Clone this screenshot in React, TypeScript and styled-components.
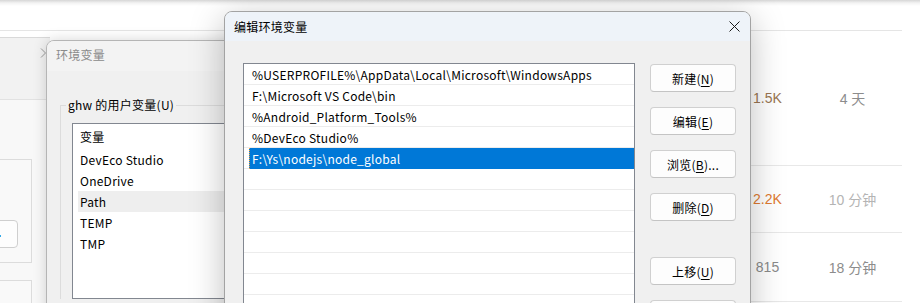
import React from "react";
import styled, { createGlobalStyle } from "styled-components";

const GlobalStyle = createGlobalStyle`
  html, body { margin: 0; padding: 0; }
  body {
    width: 920px; height: 303px; overflow: hidden; background: #fff;
    font-family: "Noto Sans CJK SC", "Noto Sans", sans-serif;
  }
  * { box-sizing: border-box; }
`;

const UI_FONT = `"Noto Sans CJK SC", "Noto Sans", sans-serif`;

const Stage = styled.div`
  position: relative;
  width: 920px;
  height: 303px;
  overflow: hidden;
  background: #fff;
`;

/* ---------- background web page ---------- */
const Page = styled.div`
  display: flex;
  flex-direction: column;
  width: 920px;
  height: 303px;
`;
const TopShade = styled.div`
  height: 6px;
  background: linear-gradient(#d6d6d6, #f3f3f3 3px, #fff);
`;
const PageHeader = styled.div`
  height: 25px;
  margin-right: 18px;
  border-bottom: 1px solid #e5e5e5;
`;
const StatRow = styled.div<{ $h: number }>`
  height: ${(p) => p.$h}px;
  flex: none;
  margin-right: 18px;
  padding-left: 739px;
  display: flex;
  align-items: center;
  border-bottom: 1px solid #e8e8e8;
  font-family: "Liberation Sans", "Noto Sans CJK SC", sans-serif;
  font-size: 14px;
`;
const Count = styled.span<{ $c: string }>`
  width: 61px;
  text-align: center;
  color: ${(p) => p.$c};
`;
const Ago = styled.span<{ $c: string }>`
  width: 106px;
  margin-left: 7px;
  text-align: center;
  color: ${(p) => p.$c};
`;

/* ---------- left background window ---------- */
const LeftWin = styled.div`
  position: absolute;
  left: -150px;
  top: 37px;
  width: 200px;
  height: 280px;
  border-top: 1px solid #d9d9d9;
  display: flex;
  flex-direction: column;
  overflow: hidden;
`;
const LeftHeader = styled.div`
  height: 62px;
  flex: none;
  background: #f2f2f2;
  border-bottom: 1px solid #e2e2e2;
  display: flex;
  justify-content: flex-end;
  padding: 10px 3px 0 0;
`;
const LeftBody = styled.div`
  flex: 1;
  background: #f8f8f8;
  padding: 59px 18px 0 20px;
  display: flex;
  flex-direction: column;
  gap: 17px;
`;
const Card = styled.div<{ $h: number }>`
  height: ${(p) => p.$h}px;
  flex: none;
  background: #f9f9f9;
  border: 1px solid #dcdcdc;
  display: flex;
  justify-content: flex-end;
  padding: 60px 13px 0 0;
`;
const GhostButton = styled.div`
  width: 60px;
  height: 28px;
  background: #fdfdfd;
  border: 1px solid #cfcfcf;
  border-radius: 4px;
  position: relative;
  &::after {
    content: "";
    position: absolute;
    right: 16px;
    top: 14px;
    width: 2px;
    height: 2px;
    background: #32a8e8;
  }
`;

/* ---------- 环境变量 window ---------- */
const EnvWin = styled.div`
  position: absolute;
  left: 46px;
  top: 40px;
  width: 520px;
  height: 300px;
  border: 1px solid #b5b5b5;
  border-radius: 8px 8px 0 0;
  background: #f0f0f0;
  box-shadow: 0 0 14px rgba(0, 0, 0, 0.16);
  font-family: ${UI_FONT};
  font-size: 12px;
  letter-spacing: 0.25px;
  overflow: hidden;
`;
const EnvTitleBar = styled.div`
  height: 30px;
  display: flex;
  align-items: center;
  padding: 0 0 4px 9px;
  background: #f3f3f3;
  color: #8a8a8a;
`;
const EnvContent = styled.div`
  padding: 26px 0 0 13px;
`;
const Group = styled.fieldset`
  margin: 0;
  padding: 0;
  border: 1px solid #dcdcdc;
  border-right: none;
  border-bottom: none;
  min-width: 0;
`;
const GroupLabel = styled.legend`
  margin-left: 5px;
  padding: 0 2px;
  line-height: 16px;
  color: #000;
`;
const UserList = styled.div`
  margin: 10px 0 0 11px;
  height: 176px;
  border: 1px solid #828790;
  border-right: none;
  background: #fff;
`;
const UserHeader = styled.div`
  height: 25px;
  display: flex;
  align-items: center;
  padding-left: 7px;
  color: #000;
`;
const UserRow = styled.div<{ $hot?: boolean }>`
  height: 21px;
  margin-left: 5px;
  padding-left: 2px;
  display: flex;
  align-items: center;
  color: #000;
  background: ${(p) => (p.$hot ? "#eeeeee" : "transparent")};
`;

/* ---------- 编辑环境变量 dialog ---------- */
const Dialog = styled.div`
  position: absolute;
  left: 224px;
  top: 11px;
  width: 527px;
  height: 330px;
  border: 1px solid #a3a3a3;
  border-radius: 8px;
  background: #f0f0f0;
  box-shadow: 0 8px 34px rgba(0, 0, 0, 0.26);
  font-family: ${UI_FONT};
  font-size: 12px;
  letter-spacing: 0.25px;
  overflow: hidden;
`;
const DlgTitleBar = styled.div`
  height: 29px;
  display: flex;
  align-items: center;
  justify-content: space-between;
  padding: 0 9px 0 9px;
  background: #eef3f9;
  color: #000;
`;
const CloseBtn = styled.div`
  width: 14px;
  height: 14px;
  display: flex;
  align-items: center;
  justify-content: center;
`;
const DlgBody = styled.div`
  display: flex;
  gap: 15px;
  padding: 22px 0 0 18px;
`;
const PathList = styled.div`
  width: 392px;
  height: 260px;
  flex: none;
  border: 1px solid #828790;
  background: #fff;
`;
const PathRow = styled.div`
  height: 21px;
  border-bottom: 1px solid #ececec;
  display: flex;
`;
const PathCell = styled.div<{ $sel?: boolean }>`
  flex: 1;
  margin-left: 5px;
  padding-left: 2px;
  display: flex;
  align-items: center;
  white-space: nowrap;
  color: ${(p) => (p.$sel ? "#fff" : "#000")};
  background: ${(p) => (p.$sel ? "#0078d7" : "transparent")};
  border-left: 1px dotted ${(p) => (p.$sel ? "#f0a040" : "transparent")};
  margin-bottom: ${(p) => (p.$sel ? "-1px" : "0")};
`;
const BtnCol = styled.div`
  display: flex;
  flex-direction: column;
  gap: 15px;
  padding-top: 1px;
`;
const Spacer = styled.div`
  height: 6px;
  flex: none;
`;
const Btn = styled.div`
  width: 86px;
  height: 28px;
  flex: none;
  display: flex;
  align-items: center;
  justify-content: center;
  background: #fdfdfd;
  border: 1px solid #d0d0d0;
  border-bottom-color: #c4c4c4;
  border-radius: 4px;
  color: #000;
  u { text-decoration-thickness: 1px; text-underline-offset: 2px; }
`;

const paths = [
  "%USERPROFILE%\\AppData\\Local\\Microsoft\\WindowsApps",
  "F:\\Microsoft VS Code\\bin",
  "%Android_Platform_Tools%",
  "%DevEco Studio%",
  "F:\\Ys\\nodejs\\node_global",
  "", "", "", "", "", "", "",
];

const userVars = ["DevEco Studio", "OneDrive", "Path", "TEMP", "TMP"];

export default function App() {
  return (
    <>
      <GlobalStyle />
      <Stage>
        <Page>
          <TopShade />
          <PageHeader />
          <StatRow $h={135}>
            <Count $c="#9a7652">1.5K</Count>
            <Ago $c="#8c8c8c">4 天</Ago>
          </StatRow>
          <StatRow $h={67}>
            <Count $c="#e07a30">2.2K</Count>
            <Ago $c="#b4b4b4">10 分钟</Ago>
          </StatRow>
          <StatRow $h={69}>
            <Count $c="#8a8a8a">815</Count>
            <Ago $c="#8c8c8c">18 分钟</Ago>
          </StatRow>
        </Page>

        <LeftWin>
          <LeftHeader>
            <svg width="7" height="10" viewBox="0 0 7 10">
              <path d="M1 0.5 L5.5 5 L1 9.5" fill="none" stroke="#9a9a9a" strokeWidth="1" />
            </svg>
          </LeftHeader>
          <LeftBody>
            <Card $h={104}>
              <GhostButton />
            </Card>
            <Card $h={60} />
          </LeftBody>
        </LeftWin>

        <EnvWin>
          <EnvTitleBar>环境变量</EnvTitleBar>
          <EnvContent>
            <Group>
              <GroupLabel>ghw 的用户变量(U)</GroupLabel>
              <UserList>
                <UserHeader>变量</UserHeader>
                {userVars.map((v) => (
                  <UserRow key={v} $hot={v === "Path"}>
                    {v}
                  </UserRow>
                ))}
              </UserList>
            </Group>
          </EnvContent>
        </EnvWin>

        <Dialog>
          <DlgTitleBar>
            <span>编辑环境变量</span>
            <CloseBtn>
              <svg width="11" height="11" viewBox="0 0 11 11">
                <path d="M0.5 0.5 L10.5 10.5 M10.5 0.5 L0.5 10.5" stroke="#1a1a1a" strokeWidth="1" fill="none" />
              </svg>
            </CloseBtn>
          </DlgTitleBar>
          <DlgBody>
            <PathList>
              {paths.map((p, i) => (
                <PathRow key={i}>
                  <PathCell $sel={i === 4}>{p}</PathCell>
                </PathRow>
              ))}
            </PathList>
            <BtnCol>
              <Btn>新建(<u>N</u>)</Btn>
              <Btn>编辑(<u>E</u>)</Btn>
              <Btn>浏览(<u>B</u>)...</Btn>
              <Btn>删除(<u>D</u>)</Btn>
              <Spacer />
              <Btn>上移(<u>U</u>)</Btn>
              <Btn aria-label="下移(O)" />
            </BtnCol>
          </DlgBody>
        </Dialog>
      </Stage>
    </>
  );
}
